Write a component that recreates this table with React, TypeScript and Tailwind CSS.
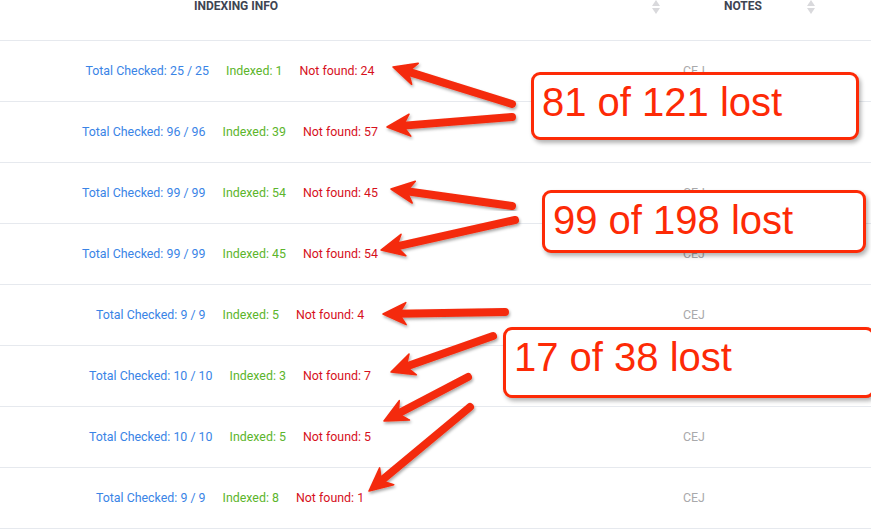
const rows = [
  { total: "25 / 25", indexed: 1, notFound: 24 },
  { total: "96 / 96", indexed: 39, notFound: 57 },
  { total: "99 / 99", indexed: 54, notFound: 45 },
  { total: "99 / 99", indexed: 45, notFound: 54 },
  { total: "9 / 9", indexed: 5, notFound: 4 },
  { total: "10 / 10", indexed: 3, notFound: 7 },
  { total: "10 / 10", indexed: 5, notFound: 5 },
  { total: "9 / 9", indexed: 8, notFound: 1 },
];

// [tailX, tailY, tipX, tipY]
const arrows: [number, number, number, number][] = [
  [512, 104, 393, 67],
  [512, 117, 387, 127],
  [512, 206, 391, 189],
  [515, 220, 381, 250],
  [505, 312, 383, 314],
  [493, 336, 391, 372],
  [468, 377, 384, 421],
  [470, 407, 369, 491],
];

const callouts = [
  { text: "81 of 121 lost", left: 531, top: 72, width: 328, height: 68 },
  { text: "99 of 198 lost", left: 542, top: 190, width: 324, height: 63 },
  { text: "17 of 38 lost", left: 503, top: 327, width: 372, height: 71 },
];

function SortIcon() {
  return (
    <svg width="8" height="14" viewBox="0 0 8 14" className="block">
      <path d="M4 0 L8 6 L0 6 Z" fill="#d9d9dc" />
      <path d="M0 8 L8 8 L4 14 Z" fill="#d9d9dc" />
    </svg>
  );
}

function arrowParts([tx, ty, hx, hy]: [number, number, number, number]) {
  const dx = hx - tx;
  const dy = hy - ty;
  const len = Math.hypot(dx, dy);
  const ux = dx / len;
  const uy = dy / len;
  const nx = -uy;
  const ny = ux;
  const L = 23;
  const W = 11;
  const bx = hx - ux * L;
  const by = hy - uy * L;
  const head = [
    [hx, hy],
    [bx + nx * W, by + ny * W],
    [hx - ux * (L - 7), hy - uy * (L - 7)],
    [bx - nx * W, by - ny * W],
  ]
    .map((p) => p.join(","))
    .join(" ");
  const ex = hx - ux * (L - 9);
  const ey = hy - uy * (L - 9);
  return { head, ex, ey };
}

function Arrows() {
  return (
    <svg className="absolute left-0 top-0 pointer-events-none" width="871" height="530">
      <defs>
        <filter id="sh" x="-20%" y="-20%" width="140%" height="140%">
          <feDropShadow dx="1" dy="2" stdDeviation="1.5" floodColor="#000" floodOpacity="0.35" />
        </filter>
      </defs>
      {arrows.map((a, i) => {
        const { head, ex, ey } = arrowParts(a);
        return (
          <g key={i} filter="url(#sh)">
            <line x1={a[0]} y1={a[1]} x2={ex} y2={ey} stroke="#f42a0c" strokeWidth="8" strokeLinecap="round" />
            <polygon points={head} fill="#f42a0c" stroke="#f42a0c" strokeWidth="1.5" strokeLinejoin="round" />
          </g>
        );
      })}
    </svg>
  );
}

export default function App() {
  return (
    <div className="relative w-[871px] h-[530px] overflow-hidden bg-white font-['Roboto',sans-serif]">
      <div className="grid grid-cols-[670px_1fr] h-[41px] border-b border-[#e6e9ee]">
        <div className="flex items-start pl-[194px] pr-[10px]">
          <span className="text-[12px] leading-none font-bold text-[#3e4452]">INDEXING INFO</span>
          <span className="ml-auto">
            <SortIcon />
          </span>
        </div>
        <div className="flex items-start pl-[54px]">
          <span className="text-[12px] leading-none font-bold text-[#3e4452]">NOTES</span>
          <span className="ml-[45px]">
            <SortIcon />
          </span>
        </div>
      </div>

      {rows.map((r, i) => (
        <div key={i} className="grid grid-cols-[670px_1fr] h-[61px] border-b border-[#e6e9ee] items-center">
          <div className="w-[460px] flex justify-center gap-[17px] text-[12.4px]">
            <span className="text-[#3a84e6]">Total Checked: {r.total}</span>
            <span className="text-[#5cb52c]">Indexed: {r.indexed}</span>
            <span className="text-[#d6101c]">Not found: {r.notFound}</span>
          </div>
          <div className="pl-[13px] text-[12.4px] text-[#a9a9ab]">CEJ</div>
        </div>
      ))}

      {callouts.map((c) => (
        <div
          key={c.text}
          className="absolute rounded-[9px] border-[3px] border-[#fd2a06] bg-white pl-[8px] pt-[7px] shadow-[2px_3px_4px_rgba(0,0,0,0.3)]"
          style={{ left: c.left, top: c.top, width: c.width, height: c.height }}
        >
          <span className="block font-['Liberation_Sans',Arial,sans-serif] text-[40px] leading-none text-[#fd2a06]">
            {c.text}
          </span>
        </div>
      ))}

      <Arrows />
    </div>
  );
}
